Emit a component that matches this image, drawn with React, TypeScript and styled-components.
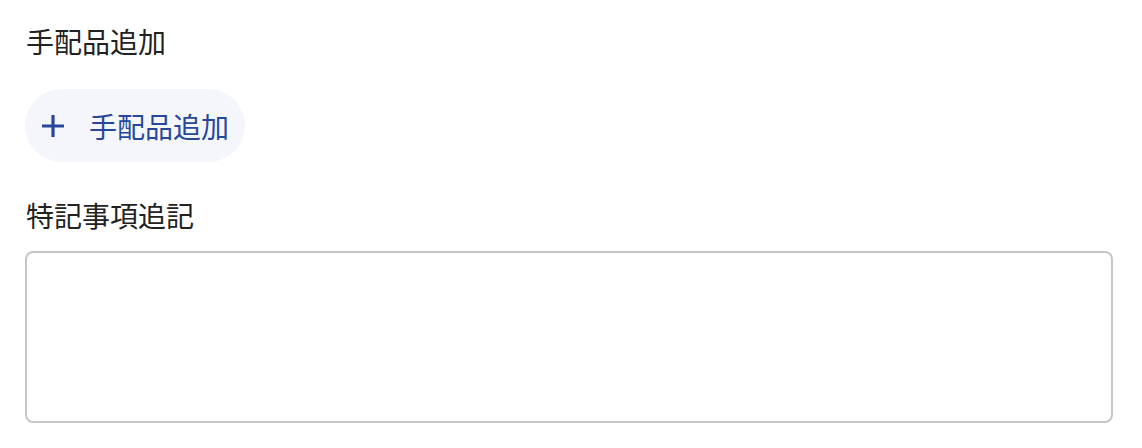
import React from "react";
import styled, { createGlobalStyle } from "styled-components";

const Global = createGlobalStyle`
  html, body { margin: 0; padding: 0; background: #ffffff; }
  body { font-family: "Noto Sans CJK JP", "Noto Sans", sans-serif; }
  * { box-sizing: border-box; }
`;

const Page = styled.div`
  display: flex;
  flex-direction: column;
  padding: 21px 29px 0 25px;
`;

const Label = styled.div`
  font-size: 28px;
  line-height: 40px;
  color: #222222;
  padding-left: 1px;
`;

const AddButton = styled.button`
  align-self: flex-start;
  display: flex;
  align-items: center;
  gap: 24px;
  height: 73px;
  width: 220px;
  margin: 28px 0 33px;
  padding: 0 16px;
  border: none;
  border-radius: 37px;
  background: #f4f6fb;
  color: #27489a;
  font-family: inherit;
  font-size: 28px;
  cursor: pointer;
`;

const Field = styled.textarea`
  margin-top: 16px;
  width: 100%;
  height: 172px;
  border: 2px solid #c6c6c6;
  border-radius: 8px;
  resize: none;
  font-family: inherit;
  font-size: 28px;
  outline: none;
`;

const PlusIcon = () => (
  <svg width="24" height="24" viewBox="0 0 24 24" fill="none">
    <path d="M12 1v22M1 12h22" stroke="currentColor" strokeWidth="3.2" />
  </svg>
);

export default function App() {
  return (
    <>
      <Global />
      <Page>
        <Label>手配品追加</Label>
        <AddButton>
          <PlusIcon />
          <span>手配品追加</span>
        </AddButton>
        <Label>特記事項追記</Label>
        <Field />
      </Page>
    </>
  );
}
